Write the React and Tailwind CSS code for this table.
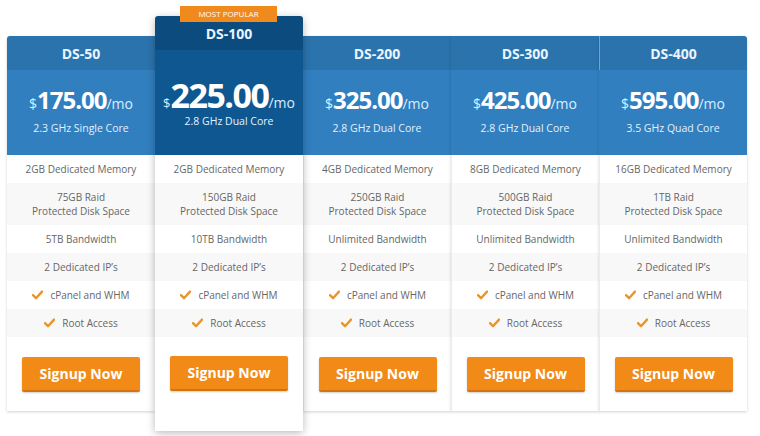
// ─── Dedicated Server Pricing Table ──────────────────────────────────

const plans = [
  { name: 'DS-50', price: '175.00', cpu: '2.3 GHz Single Core', mem: '2GB', disk: '75GB', bw: '5TB Bandwidth' },
  { name: 'DS-100', price: '225.00', cpu: '2.8 GHz Dual Core', mem: '2GB', disk: '150GB', bw: '10TB Bandwidth', featured: true },
  { name: 'DS-200', price: '325.00', cpu: '2.8 GHz Dual Core', mem: '4GB', disk: '250GB', bw: 'Unlimited Bandwidth' },
  { name: 'DS-300', price: '425.00', cpu: '2.8 GHz Dual Core', mem: '8GB', disk: '500GB', bw: 'Unlimited Bandwidth' },
  { name: 'DS-400', price: '595.00', cpu: '3.5 GHz Quad Core', mem: '16GB', disk: '1TB', bw: 'Unlimited Bandwidth', last: true },
];

function Check() {
  return (
    <svg width="11" height="10" viewBox="0 0 11 10" className="mr-[7px] shrink-0">
      <path d="M1 5.2 L4 8.2 L10 1.6" fill="none" stroke="#e8952c" strokeWidth="2.4" strokeLinecap="round" strokeLinejoin="round" />
    </svg>
  );
}

function Features({ plan }) {
  const row = 'flex items-center justify-center text-center text-[10px] leading-[14px] text-[#666]';
  return (
    <div>
      <div className={`${row} h-[28px] bg-white`}>{plan.mem} Dedicated Memory</div>
      <div className={`${row} h-[42px] bg-[#f8f8f8] flex-col`}><span>{plan.disk} Raid</span><span>Protected Disk Space</span></div>
      <div className={`${row} h-[28px] bg-white`}>{plan.bw}</div>
      <div className={`${row} h-[28px] bg-[#f8f8f8]`}>2 Dedicated IP’s</div>
      <div className={`${row} h-[28px] bg-white`}><Check />cPanel and WHM</div>
      <div className={`${row} h-[28px] bg-[#f8f8f8]`}><Check />Root Access</div>
    </div>
  );
}

function SignupButton() {
  return (
    <button className="w-[118px] h-[35px] rounded-[2px] bg-[#f28a17] border-b-2 border-[#d4740e] text-white font-bold text-[14px] shadow-[0_1px_2px_rgba(0,0,0,0.2)]">
      Signup Now
    </button>
  );
}

function PlanColumn({ plan, first }) {
  const body = first ? '' : 'border-l border-[#ececec]';
  return (
    <div className={`w-[148px] mt-[20px] bg-white shadow-[0_1px_3px_rgba(0,0,0,0.18)] ${first ? 'rounded-tl-[3px]' : ''} ${plan.last ? 'rounded-tr-[3px]' : ''}`}>
      <div className={`h-[34px] flex items-center justify-center bg-[#2b73ad] text-[#e9f5ff] font-bold text-[14px] ${first ? 'rounded-tl-[3px]' : ''} ${plan.last ? 'rounded-tr-[3px] border-l border-[#6aa6d6]' : ''}`}>
        {plan.name}
      </div>
      <div className="h-[85px] bg-[#317fbf] flex flex-col items-center pt-[14px] text-white">
        <div className="flex items-baseline h-[32px] leading-[32px]">
          <span className="text-[14px] text-[#dbeeff]">$</span>
          <span className="text-[24px] font-bold tracking-[-1px]">{plan.price}</span>
          <span className="text-[14px] text-[#dbeeff]">/mo</span>
        </div>
        <div className="mt-[4px] text-[10.5px] leading-[16px] text-[#e3f1fd]">{plan.cpu}</div>
      </div>
      <div className={body}>
        <Features plan={plan} />
        <div className="flex justify-center pt-[20px] pb-[19px]">
          <SignupButton />
        </div>
      </div>
    </div>
  );
}

function FeaturedColumn({ plan }) {
  return (
    <div className="relative z-10 w-[148px] bg-white rounded-t-[3px] shadow-[0_2px_8px_rgba(0,0,0,0.28)]">
      <div className="absolute -top-[10px] left-[25px] w-[97px] h-[16px] bg-[#f08a1c] flex items-center justify-center text-white text-[8px] leading-none uppercase">
        Most Popular
      </div>
      <div className="h-[34px] flex items-end justify-center pb-[6px] rounded-t-[3px] bg-[#0b4b7e] text-[#e9f5ff] font-bold text-[14px]">
        {plan.name}
      </div>
      <div className="h-[105px] bg-[#0e5791] flex flex-col items-center pt-[27px] text-white">
        <div className="flex items-baseline h-[36px] leading-[36px]">
          <span className="text-[13px] text-[#dbeeff]">$</span>
          <span className="text-[34px] font-bold tracking-[-1.5px]">{plan.price}</span>
          <span className="text-[14px] text-[#dbeeff]">/mo</span>
        </div>
        <div className="text-[10.5px] leading-[16px] text-[#e3f1fd]">{plan.cpu}</div>
      </div>
      <Features plan={plan} />
      <div className="flex justify-center pt-[19px] pb-[40px]">
        <SignupButton />
      </div>
    </div>
  );
}

export default function App() {
  return (
    <div className="w-[760px] h-[436px] bg-white pt-[16px] pl-[7px] flex items-start font-['Open_Sans',sans-serif]">
      {plans.map((plan, i) =>
        plan.featured
          ? <FeaturedColumn key={plan.name} plan={plan} />
          : <PlanColumn key={plan.name} plan={plan} first={i === 0} />
      )}
    </div>
  );
}
